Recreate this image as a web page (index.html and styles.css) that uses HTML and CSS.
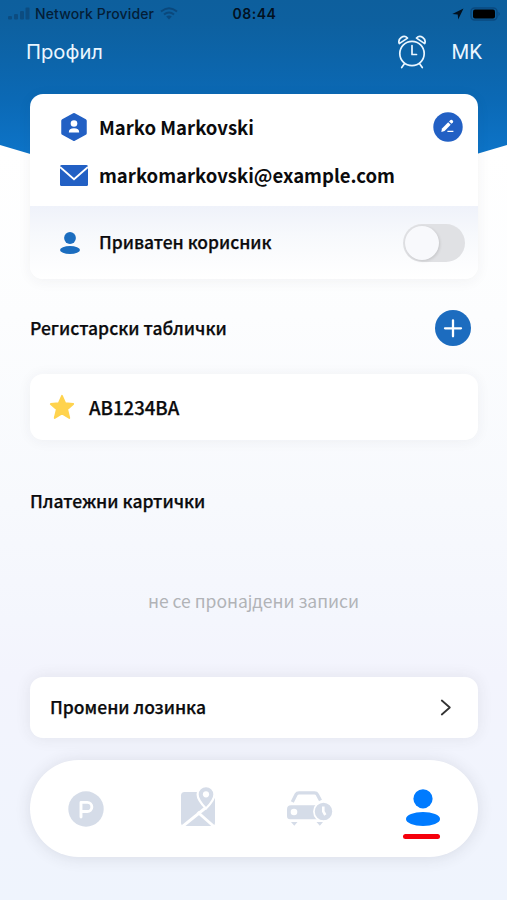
FILE: index.html
```html
<!DOCTYPE html>
<html lang="mk">
<head>
    <meta charset="UTF-8">
    <meta name="viewport" content="width=device-width, initial-scale=1.0">
    <title>Профил</title>
    <link rel="stylesheet" href="styles.css">
</head>
<body>
    <div class="screen">
        <svg class="header-bg" viewBox="0 0 507 275" preserveAspectRatio="none">
            <defs>
                <linearGradient id="blue" x1="0" y1="0" x2="0" y2="1">
                    <stop offset="0" stop-color="#0d5f9d"/>
                    <stop offset="0.1" stop-color="#0d609f"/>
                    <stop offset="0.45" stop-color="#0b69b5"/>
                    <stop offset="0.7" stop-color="#0d74c8"/>
                    <stop offset="1" stop-color="#0d74c8"/>
                </linearGradient>
            </defs>
            <path fill="url(#blue)" d="M0 0H507V145L253 220L0 145Z"/>
        </svg>

        <div class="status-bar">
            <div class="carrier">
                <svg class="signal" width="22" height="13" viewBox="0 0 22 13">
                    <rect x="0" y="9" width="4" height="3.5" rx="1"/>
                    <rect x="6" y="7" width="4" height="5.5" rx="1"/>
                    <rect x="12" y="4" width="4" height="8.5" rx="1"/>
                    <rect x="17.5" y="0.5" width="4" height="12" rx="1"/>
                </svg>
                <span class="carrier-name">Network Provider</span>
                <svg class="wifi" width="18" height="13" viewBox="0 0 18 13">
                    <path d="M1 4.5Q9-2 17 4.5M4 7.5Q9 3.4 14 7.5" fill="none" stroke="#0a3f6f" stroke-width="2"/>
                    <path d="M6.2 9.6Q9 7.2 11.8 9.6L9 12.4Z" fill="#0a3f6f"/>
                </svg>
            </div>
            <div class="time">08:44</div>
            <div class="battery">
                <svg width="12" height="12" viewBox="0 0 12 12"><path d="M.3 6.1L11.5.5L6.2 11.5L5.7 6.4Z" fill="#02111f"/></svg>
                <svg width="31" height="14" viewBox="0 0 31 14">
                    <rect x="1" y="1" width="26" height="12" rx="3.5" fill="none" stroke="#0a4a80" stroke-width="1.4"/>
                    <rect x="3" y="2.5" width="22" height="9" rx="2" fill="#000"/>
                    <path d="M28.5 4.8Q31 7 28.5 9.2Z" fill="#0a4a80"/>
                </svg>
            </div>
        </div>

        <div class="top-bar">
            <h1>Профил</h1>
            <svg class="alarm" width="30" height="34" viewBox="0 0 30 34" fill="none" stroke="#eaf6ff" stroke-width="1.7" stroke-linecap="round" stroke-linejoin="round">
                <circle cx="15" cy="18.5" r="12.2"/>
                <path d="M15 10.5V19.5H19.5M7.2 29L4.7 32.5M22.8 29L25.3 32.5"/>
                <path d="M2.3 8.6Q.8 5 4.2 2.5Q7.8.2 10.5 3.1Z"/>
                <path d="M27.7 8.6Q29.2 5 25.8 2.5Q22.2.2 19.5 3.1Z"/>
            </svg>
            <span class="lang">MK</span>
        </div>

        <div class="profile-card">
            <div class="user-info">
                <div class="info-row">
                    <svg class="info-icon" width="28" height="28" viewBox="0 0 28 28">
                        <path d="M14 1.8L25 7.7V20.3L14 26.2L3 20.3V7.7Z" fill="#2260c4" stroke="#2260c4" stroke-width="3.5" stroke-linejoin="round"/>
                        <circle cx="14" cy="10.5" r="3.3" fill="#fff"/>
                        <path d="M8.8 19.5Q8.8 15.3 14 15.3T19.2 19.5Z" fill="#fff"/>
                    </svg>
                    <span class="name">Marko Markovski</span>
                    <svg class="edit" width="30" height="30" viewBox="0 0 30 30">
                        <circle cx="15" cy="15" r="14.7" fill="#2260c4"/>
                        <path d="M8.3 20L9 16.6L15.2 10.3L17.7 12.7L11.6 19Z" fill="#fff"/>
                        <path d="M16 9.4L17.5 8Q18.7 7.3 19.7 8.4T19.9 10.5L18.5 11.8Z" fill="#fff"/>
                        <path d="M14.4 19.3H20.4" stroke="#fff" stroke-width="1.3"/>
                    </svg>
                </div>
                <div class="info-row">
                    <svg class="info-icon" width="28" height="21" viewBox="0 0 28 21">
                        <rect width="28" height="21" rx="1.5" fill="#2260c4"/>
                        <path d="M0 2L14 14.2L28 2" fill="none" stroke="#fff" stroke-width="1.8"/>
                    </svg>
                    <span class="email">markomarkovski@example.com</span>
                </div>
            </div>
            <div class="user-type">
                <svg class="type-icon" width="20" height="22" viewBox="0 0 20 22" fill="#1b6dbf">
                    <circle cx="10" cy="6" r="5.9"/>
                    <ellipse cx="10" cy="18" rx="10" ry="4"/>
                </svg>
                <span class="type-label">Приватен корисник</span>
                <div class="toggle"><div class="knob"></div></div>
            </div>
        </div>

        <div class="section-title plates-title">
            <h2>Регистарски таблички</h2>
            <svg width="36" height="36" viewBox="0 0 36 36">
                <circle cx="18" cy="18" r="18" fill="#1c6cbf"/>
                <path d="M10 18.3H26M18 10.3V26.3" stroke="#fff" stroke-width="2.3" stroke-linecap="round"/>
            </svg>
        </div>

        <div class="plate-card">
            <svg width="26" height="26" viewBox="0 0 26 26">
                <path d="M13 1.8L16.2 9.2L24.2 10L18.2 15.2L20.3 24L13 19.4L5.7 24L7.8 15.2L1.8 10L9.8 9.2Z" fill="#ffd34e" stroke="#ffd34e" stroke-width="1.8" stroke-linejoin="round"/>
            </svg>
            <span class="plate">AB1234BA</span>
        </div>

        <div class="section-title cards-title">
            <h2>Платежни картички</h2>
        </div>
        <div class="empty">не се пронајдени записи</div>

        <div class="password-card">
            <span class="password-text">Промени лозинка</span>
            <svg width="12" height="17" viewBox="0 0 12 17"><path d="M1.8 1.5L9.8 8.5L1.8 15.5" fill="none" stroke="#333" stroke-width="1.8" stroke-linecap="round" stroke-linejoin="round"/></svg>
        </div>

        <div class="tab-bar">
            <div class="tab">
                <svg width="36" height="36" viewBox="0 0 36 36">
                    <circle cx="18" cy="18" r="17.7" fill="#d5dce8"/>
                    <path d="M13 26V11.4H19.3A4.5 4.5 0 0 1 19.3 20.5H13" fill="none" stroke="#fff" stroke-width="2.9" stroke-linecap="round" stroke-linejoin="round"/>
                </svg>
            </div>
            <div class="tab">
                <svg class="map" width="36" height="41" viewBox="0 0 36 41">
                    <rect x="1" y="6" width="34" height="34" rx="3.5" fill="#d5dce8"/>
                    <path d="M2.5 40.5L26 21.5M17.5 26L34 40.5" stroke="#fff" stroke-width="2.9"/>
                    <path d="M26 22.5C21.5 18 17.6 13 17.6 8.5A8.4 8.4 0 0 1 34.4 8.5C34.4 13 30.5 18 26 22.5Z" fill="#d5dce8" stroke="#fff" stroke-width="2.2"/>
                    <circle cx="26" cy="8.3" r="3.1" fill="#fff"/>
                </svg>
            </div>
            <div class="tab">
                <svg width="48" height="36" viewBox="0 0 48 36">
                    <path d="M6.3 11L10.2 3.3Q11 1.8 13 1.8H28.5Q30.5 1.8 31.2 3.3L34.5 9.5" fill="none" stroke="#d5dce8" stroke-width="3.3"/>
                    <path d="M5 14.3H32V28.3H4Q1 28.3 1 25V18.3Q1 14.3 5 14.3Z" fill="#d5dce8"/>
                    <circle cx="8" cy="21" r="3.3" fill="#fff"/>
                    <path d="M5 31H11.5L8.3 34.8ZM30.5 31H37L33.8 34.8Z" fill="#d5dce8"/>
                    <circle cx="37.5" cy="20.5" r="9.6" fill="#d5dce8" stroke="#fff" stroke-width="1.7"/>
                    <path d="M37.3 15.5V20.5L39.3 24" fill="none" stroke="#fff" stroke-width="2.6"/>
                </svg>
            </div>
            <div class="tab active">
                <svg width="34" height="37" viewBox="0 0 34 37" fill="#007bff">
                    <circle cx="17" cy="9.8" r="9.6"/>
                    <ellipse cx="17" cy="30" rx="17" ry="7"/>
                </svg>
                <div class="underline"></div>
            </div>
        </div>
    </div>
</body>
</html>
```
FILE: styles.css
```css
* {
    box-sizing: border-box;
}
body {
    margin: 0;
    font-family: "Noto Sans CJK SC", "Noto Sans", sans-serif;
    color: #0b0b0d;
}
svg {
    display: block;
    flex-shrink: 0;
}
h1, h2 {
    margin: 0;
}
.screen {
    position: relative;
    width: 507px;
    height: 900px;
    overflow: hidden;
    display: flex;
    flex-direction: column;
    white-space: nowrap;
    background: linear-gradient(#ffffff 17%, #fcfdfe 35%, #f7f9fd 56%, #f4f6fd 69%, #f3f4fd 75%, #eff4fd 100%);
}
.header-bg {
    position: absolute;
    left: 0;
    top: 0;
    width: 507px;
    height: 275px;
}
.status-bar {
    position: relative;
    height: 27px;
    display: grid;
    grid-template-columns: 1fr auto 1fr;
    align-items: center;
    padding: 0 6px 0 8px;
    font-family: Inter, sans-serif;
    font-size: 14px;
    color: #041e37;
}
.carrier {
    display: flex;
    align-items: center;
    gap: 5px;
}
.signal {
    fill: #0c4c80;
}
.carrier-name {
    font-weight: 500;
    letter-spacing: 0.13px;
}
.wifi {
    margin-left: 1px;
    opacity: 0.7;
}
.time {
    font-weight: 600;
    letter-spacing: 0.5px;
    color: #02111f;
}
.battery {
    display: flex;
    align-items: center;
    justify-content: flex-end;
    gap: 6px;
}
.top-bar {
    position: relative;
    height: 49px;
    display: flex;
    align-items: center;
    padding: 0 25px 0 26px;
    color: #eaf6ff;
    font-family: Roboto, sans-serif;
}
.top-bar h1 {
    flex: 1;
    font-size: 20.2px;
    font-weight: 400;
    font-family: Inter, sans-serif;
}
.lang {
    margin-left: 25px;
    font-size: 20.3px;
}
.profile-card {
    position: relative;
    margin: 18px 29px 0 30px;
    height: 185px;
    border-radius: 13px;
    overflow: hidden;
    background: white;
    box-shadow: 0 2px 14px rgba(50, 50, 60, 0.06);
}
.user-info {
    height: 112px;
    padding: 9px 15px 6px 30px;
}
.info-row {
    height: 48px;
    display: flex;
    align-items: center;
    font-size: 18.55px;
    font-weight: 700;
}
.info-icon {
    margin-right: 11px;
}
.name, .email, .type-label, .plate, .password-text {
    padding-bottom: 2px;
}
.edit {
    margin-left: auto;
}
.user-type {
    height: 73px;
    display: flex;
    align-items: center;
    padding: 0 13px 0 30px;
    font-size: 17.45px;
    font-weight: 500;
    -webkit-text-stroke: 0.25px;
    background: linear-gradient(#eff2fa, #f7f9fc 40%, #ffffff);
}
.type-label {
    margin-left: 19px;
}
.toggle {
    margin-left: auto;
    width: 62px;
    height: 38px;
    padding: 2px;
    border-radius: 19px;
    background: #e0e1e4;
}
.knob {
    width: 34px;
    height: 34px;
    border-radius: 50%;
    background: #f8f9fc;
    box-shadow: 1px 1px 3px rgba(0, 0, 0, 0.12);
}
.section-title {
    display: flex;
    align-items: center;
    justify-content: space-between;
    height: 36px;
    padding: 0 36px 0 30px;
}
.section-title h2 {
    padding-bottom: 2px;
    font-size: 17.55px;
    font-weight: 500;
    -webkit-text-stroke: 0.25px;
}
.plates-title {
    margin-top: 31px;
}
.plate-card {
    margin: 28px 29px 0 30px;
    height: 66px;
    padding: 0 19px;
    display: flex;
    align-items: center;
    gap: 14px;
    border-radius: 13px;
    background: white;
    box-shadow: 0 1px 14px rgba(50, 50, 60, 0.06);
    font-size: 18.6px;
    font-weight: 500;
    -webkit-text-stroke: 0.25px;
}
.cards-title {
    margin-top: 43px;
}
.empty {
    margin-top: 66px;
    height: 32px;
    line-height: 31px;
    text-align: center;
    font-size: 17.5px;
    color: #b1b3b7;
}
.password-card {
    margin: 60px 29px 0 30px;
    height: 61px;
    padding: 0 26px 0 20px;
    display: flex;
    align-items: center;
    justify-content: space-between;
    border-radius: 13px;
    background: white;
    box-shadow: 0 0 16px rgba(50, 50, 60, 0.09);
    font-size: 17.5px;
    font-weight: 500;
    -webkit-text-stroke: 0.25px;
}
.tab-bar {
    margin: 22px 29px 0 30px;
    height: 97px;
    display: grid;
    grid-template-columns: repeat(4, 1fr);
    border-radius: 49px;
    background: white;
    box-shadow: 0 1px 16px rgba(50, 50, 60, 0.12);
}
.tab {
    display: flex;
    flex-direction: column;
    align-items: center;
    justify-content: center;
}
.tab.active {
    padding: 10px 0 0 1px;
}
.map {
    margin-bottom: 5px;
}
.underline {
    width: 37px;
    height: 5px;
    margin-top: 8px;
    margin-right: 3px;
    border-radius: 3px;
    background: #f5000b;
}
```
